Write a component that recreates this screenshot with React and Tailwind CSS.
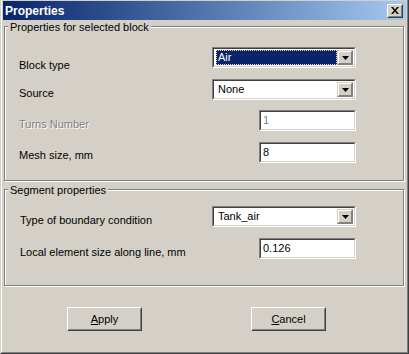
import React from 'react';

const raised =
  'border border-t-white border-l-white border-r-[#404040] border-b-[#404040]';
const raisedInner =
  'border border-t-[#d4d0c8] border-l-[#d4d0c8] border-r-[#808080] border-b-[#808080]';
const sunken =
  'border border-t-[#808080] border-l-[#808080] border-r-white border-b-white';
const sunkenInner =
  'border border-t-[#404040] border-l-[#404040] border-r-[#d4d0c8] border-b-[#d4d0c8]';

const Arrow = () => (
  <svg width="7" height="4" viewBox="0 0 7 4">
    <path d="M0 0h7L3.5 4z" fill="#000" />
  </svg>
);

const Combo = ({ value, focused }) => (
  <div className={`flex h-[21px] w-[144px] ${sunken}`}>
    <div className={`flex flex-1 bg-white p-[1px] ${sunkenInner}`}>
      <div className="flex flex-1 items-center pl-[1px]">
        {focused ? (
          <div className="flex h-full flex-1 items-center bg-[#0a246a] pl-[2px] text-white outline-1 outline-dotted outline-offset-[-1px] outline-[#e8e0a0]">
            {value}
          </div>
        ) : (
          <div className="pl-[2px] text-black">{value}</div>
        )}
      </div>
      <div className={`flex w-[16px] items-stretch bg-[#d4d0c8] ${raisedInner}`}>
        <div className="flex flex-1 items-center justify-center border border-t-white border-l-white border-r-[#808080] border-b-[#808080]">
          <Arrow />
        </div>
      </div>
    </div>
  </div>
);

const Edit = ({ value, disabled }) => (
  <div className={`flex h-[21px] w-[97px] ${sunken}`}>
    <div className={`flex flex-1 items-center bg-white pl-[2px] ${sunkenInner} ${disabled ? 'text-[#808080]' : 'text-black'}`}>
      {value}
    </div>
  </div>
);

const Label = ({ children, disabled, className }) => (
  <div
    className={`leading-[13px] ${disabled ? 'text-[#808080] [text-shadow:1px_1px_0_#fff]' : 'text-black'} ${className}`}
  >
    {children}
  </div>
);

const GroupBox = ({ title, className, children }) => (
  <div
    className={`relative ml-[1px] w-[400px] border border-[#808080] shadow-[1px_1px_0_#fff,inset_1px_1px_0_#fff] ${className}`}
  >
    <span className="absolute left-[3px] top-[-6px] bg-[#d4d0c8] px-[2px] leading-[13px] text-black">
      {title}
    </span>
    {children}
  </div>
);

const Button = ({ hot, rest }) => (
  <button className={`h-[24px] w-[75px] bg-[#d4d0c8] ${raised}`}>
    <div className={`flex h-full items-center justify-center ${raisedInner}`}>
      <span>
        <span className="underline">{hot}</span>
        {rest}
      </span>
    </div>
  </button>
);

export default function App() {
  return (
    <div
      className="h-[354px] w-[409px] bg-[#d4d0c8] text-[11px] text-black"
      style={{ fontFamily: '"Liberation Sans", Arial, sans-serif' }}
    >
      <div className="h-full border-l border-r border-b border-l-[#d4d0c8] border-r-[#404040] border-b-[#404040]">
        <div className="flex h-full flex-col border-l border-r border-b border-l-white border-r-[#808080] border-b-[#808080] px-[1px] pt-[1px]">
          {/* Title bar */}
          <div className="flex h-[19px] items-center justify-between bg-gradient-to-r from-[#0a246a] to-[#a6caf0] pl-[2px] pr-[3px]">
            <span className="text-[12px] font-bold text-white">Properties</span>
            <div className={`flex h-[14px] w-[16px] bg-[#d4d0c8] ${raised}`}>
              <div className={`flex flex-1 items-center justify-center ${raisedInner}`}>
                <svg width="8" height="7" viewBox="0 0 8 7">
                  <path d="M0 0h2l2 2.5L6 0h2L5 3.5 8 7H6L4 4.5 2 7H0l3-3.5z" fill="#000" />
                </svg>
              </div>
            </div>
          </div>

          {/* Block properties */}
          <GroupBox title="Properties for selected block" className="mt-[6px] h-[155px]">
            <div className="flex flex-col pl-[14px] pr-[47px] pt-[20px]">
              <div className="flex h-[21px] justify-between">
                <Label className="mt-[12px]">Block type</Label>
                <Combo value="Air" focused />
              </div>
              <div className="mt-[11px] flex h-[21px] justify-between">
                <Label className="mt-[8px]">Source</Label>
                <Combo value="None" />
              </div>
              <div className="mt-[10px] flex h-[21px] justify-between">
                <Label className="mt-[8px]" disabled>
                  Turns Number
                </Label>
                <Edit value="1" disabled />
              </div>
              <div className="mt-[11px] flex h-[21px] justify-between">
                <Label className="mt-[7px]">Mesh size, mm</Label>
                <Edit value="8" />
              </div>
            </div>
          </GroupBox>

          {/* Segment properties */}
          <GroupBox title="Segment properties" className="mt-[8px] h-[97px]">
            <div className="flex flex-col pl-[15px] pr-[47px] pt-[16px]">
              <div className="flex h-[21px] justify-between">
                <Label className="mt-[8px]">Type of boundary condition</Label>
                <Combo value="Tank_air" />
              </div>
              <div className="mt-[11px] flex h-[21px] justify-between">
                <Label className="mt-[8px]">Local element size along line, mm</Label>
                <Edit value="0.126" />
              </div>
            </div>
          </GroupBox>

          {/* Buttons */}
          <div className="mt-[21px] flex gap-[109px] pl-[64px]">
            <Button hot="A" rest="pply" />
            <Button hot="C" rest="ancel" />
          </div>
        </div>
      </div>
    </div>
  );
}
